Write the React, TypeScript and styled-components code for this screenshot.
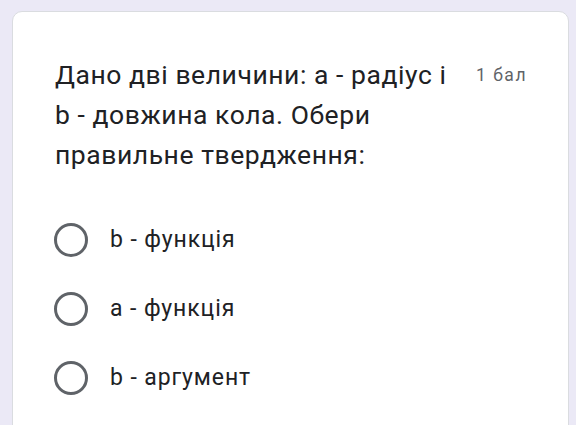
import React from "react";
import styled, { createGlobalStyle } from "styled-components";

const GlobalStyle = createGlobalStyle`
    html, body {
        margin: 0;
        padding: 0;
        background: #ebe9f6;
        font-family: Roboto, "Noto Sans", Arial, sans-serif;
    }
`;

const Page = styled.div`
    width: 576px;
    height: 425px;
    overflow: hidden;
    padding: 11px 7px 0 12px;
    box-sizing: border-box;
`;

const Card = styled.div`
    background: #fff;
    border: 1px solid #dadce0;
    border-radius: 10px;
    padding: 43px 41px 40px 42px;
    min-height: 460px;
    box-sizing: border-box;
`;

const Header = styled.div`
    display: flex;
    align-items: flex-start;
    justify-content: space-between;
`;

const Title = styled.div`
    width: 404px;
    font-size: 26.5px;
    line-height: 40px;
    letter-spacing: 0.55px;
    color: #202124;
`;

const Points = styled.div`
    font-size: 17.5px;
    line-height: 40px;
    letter-spacing: 1.5px;
    color: #5f6368;
    white-space: nowrap;
`;

const Options = styled.div`
    display: flex;
    flex-direction: column;
    margin-top: 30px;
`;

const Option = styled.label`
    display: flex;
    align-items: center;
    height: 69px;
    gap: 22px;
    cursor: pointer;
`;

const Radio = styled.span`
    width: 34px;
    height: 34px;
    margin-left: -1px;
    border: 3.5px solid #5f6368;
    border-radius: 50%;
    box-sizing: border-box;
    flex-shrink: 0;
`;

const OptionText = styled.span`
    font-size: 23px;
    letter-spacing: 0.9px;
    color: #202124;
`;

const options = ["b - функція", "а - функція", "b - аргумент"];

export default function App() {
    return (
        <Page>
            <GlobalStyle />
            <Card>
                <Header>
                    <Title>Дано дві величини: а - радіус і b - довжина кола. Обери правильне твердження:</Title>
                    <Points>1 бал</Points>
                </Header>
                <Options>
                    {options.map((o) => (
                        <Option key={o}>
                            <Radio />
                            <OptionText>{o}</OptionText>
                        </Option>
                    ))}
                </Options>
            </Card>
        </Page>
    );
}
